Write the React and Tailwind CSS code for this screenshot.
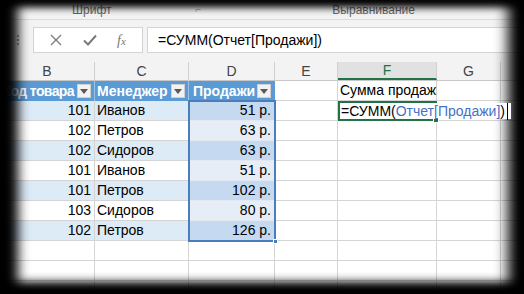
import React from "react";

const rows = [
  ["101", "Иванов", "51 р."],
  ["102", "Петров", "63 р."],
  ["102", "Сидоров", "63 р."],
  ["101", "Иванов", "51 р."],
  ["101", "Петров", "102 р."],
  ["103", "Сидоров", "80 р."],
  ["102", "Петров", "126 р."],
];

const Drop = () => (
  <span className="flex items-center justify-center w-[14px] h-[14px] bg-[#f2f2f2] border border-[#d0d0d0] shrink-0">
    <svg width="8" height="5" viewBox="0 0 8 5">
      <path d="M0 0h8L4 5z" fill="#595959" />
    </svg>
  </span>
);

const ColHead = ({ w, label, active }) => (
  <div
    className={`${w} h-full flex items-center justify-center border-r border-[#d0d0d0] text-[14px] shrink-0 ${
      active
        ? "bg-[#e1e1e1] text-[#217346] border-b-2 border-b-[#217346]"
        : "text-[#444]"
    }`}
  >
    {label}
  </div>
);

const App = () => {
  return (
    <div
      className="relative w-[524px] h-[294px] overflow-hidden bg-[#f3f3f3] text-black"
      style={{ fontFamily: '"Liberation Sans", Arial, sans-serif' }}
    >
      {/* ribbon labels */}
      <div className="h-[20px] flex items-center text-[12px] text-[#666] border-b border-[#dcdcdc]">
        <span className="ml-[72px]">Шрифт</span>
        <span className="ml-[84px] text-[10px] text-[#aaa]">⌐</span>
        <span className="ml-[131px]">Выравнивание</span>
      </div>

      {/* formula bar */}
      <div className="h-[42px] flex items-start pt-[7px]">
        <div className="w-[33px] h-[26px] flex flex-col items-center justify-center gap-[2px] pl-[3px]">
          <span className="w-[2px] h-[2px] bg-[#999]" />
          <span className="w-[2px] h-[2px] bg-[#999]" />
          <span className="w-[2px] h-[2px] bg-[#999]" />
        </div>
        <div className="w-[110px] h-[26px] bg-white border border-[#d4d4d4] flex items-center justify-around px-[6px]">
          <svg width="12" height="12" viewBox="0 0 12 12">
            <path d="M1 1l10 10M11 1L1 11" stroke="#7a7a7a" strokeWidth="1.3" />
          </svg>
          <svg width="14" height="12" viewBox="0 0 14 12">
            <path d="M1 6.5l4 4L13 1.5" stroke="#7a7a7a" strokeWidth="2" fill="none" />
          </svg>
          <span
            className="text-[14px] text-[#777] italic"
            style={{ fontFamily: '"Liberation Serif", serif' }}
          >
            f<span className="text-[11px]">x</span>
          </span>
        </div>
        <div className="flex-1 ml-[4px] h-[26px] bg-white border border-[#d4d4d4] flex items-center pl-[10px] text-[14px]">
          =СУММ(Отчет[Продажи])
        </div>
      </div>

      {/* column headers */}
      <div className="h-[19px] flex bg-[#f3f3f3] border-b border-[#c8c8c8]">
        <ColHead w="w-[95px]" label="B" />
        <ColHead w="w-[94px]" label="C" />
        <ColHead w="w-[86px]" label="D" />
        <ColHead w="w-[63px]" label="E" />
        <ColHead w="w-[99px]" label="F" active />
        <ColHead w="w-[64px]" label="G" />
        <div className="flex-1" />
      </div>

      {/* grid */}
      <div className="relative bg-white text-[14px]">
        {/* table header row */}
        <div className="h-[20px] flex">
          <div className="w-[95px] shrink-0 bg-[#5b9bd5] text-white font-bold flex items-center justify-end gap-[3px] pr-[3px] border-r border-[#9dc3e6] whitespace-nowrap">
            <span className="tracking-[-0.6px]">Код товара</span>
            <Drop />
          </div>
          <div className="w-[94px] shrink-0 bg-[#5b9bd5] text-white font-bold flex items-center justify-between pl-[2px] pr-[3px] border-r border-[#9dc3e6]">
            <span>Менеджер</span>
            <Drop />
          </div>
          <div className="w-[86px] shrink-0 bg-[#5b9bd5] text-white font-bold flex items-center justify-between pl-[4px] pr-[4px]">
            <span>Продажи</span>
            <Drop />
          </div>
          <div className="w-[63px] shrink-0 border-r border-b border-[#d4d4d4]" />
          <div className="w-[99px] shrink-0 border-r border-b border-[#d4d4d4] flex items-center pl-[2px] whitespace-nowrap">
            Сумма продаж
          </div>
          <div className="w-[64px] shrink-0 border-r border-b border-[#d4d4d4]" />
          <div className="flex-1 border-b border-[#d4d4d4]" />
        </div>

        {rows.map(([code, name, sum], i) => {
          const band = i % 2 === 0;
          return (
            <div key={i} className="h-[20px] flex">
              <div
                className={`w-[95px] shrink-0 flex items-center justify-end pr-[3px] border-r border-b border-[#d4d4d4] ${
                  band ? "bg-[#ddebf7]" : "bg-white"
                }`}
              >
                {code}
              </div>
              <div
                className={`w-[94px] shrink-0 flex items-center pl-[2px] border-r border-b border-[#d4d4d4] ${
                  band ? "bg-[#ddebf7]" : "bg-white"
                }`}
              >
                {name}
              </div>
              <div
                className={`w-[86px] shrink-0 flex items-center justify-end pr-[4px] border-b border-[#e2e8f0] ${
                  band ? "bg-[#c5d9f1]" : "bg-[#e6edf7]"
                }`}
              >
                {sum}
              </div>
              <div className="w-[63px] shrink-0 border-r border-b border-[#d4d4d4]" />
              {i === 0 ? (
                <div className="relative w-[99px] shrink-0 border-2 border-[#217346]">
                  <span className="absolute left-0 top-0 h-full z-10 flex items-center pl-[1px] pr-[3px] bg-white whitespace-nowrap">
                    =СУММ(
                    <span className="text-[#4472c4]">Отчет[Продажи]</span>
                    )
                    <span className="ml-[2px] w-px h-[17px] bg-black" />
                  </span>
                  <span className="absolute -right-[4px] -bottom-[4px] w-[6px] h-[6px] bg-[#217346] border border-white" />
                </div>
              ) : (
                <div className="w-[99px] shrink-0 border-r border-b border-[#d4d4d4]" />
              )}
              <div className="w-[64px] shrink-0 border-r border-b border-[#d4d4d4]" />
              <div className="flex-1 border-b border-[#d4d4d4]" />
            </div>
          );
        })}

        {[0, 1, 2].map((i) => (
          <div key={i} className="h-[20px] flex">
            <div className="w-[95px] shrink-0 border-r border-b border-[#d4d4d4]" />
            <div className="w-[94px] shrink-0 border-r border-b border-[#d4d4d4]" />
            <div className="w-[86px] shrink-0 border-r border-b border-[#d4d4d4]" />
            <div className="w-[63px] shrink-0 border-r border-b border-[#d4d4d4]" />
            <div className="w-[99px] shrink-0 border-r border-b border-[#d4d4d4]" />
            <div className="w-[64px] shrink-0 border-r border-b border-[#d4d4d4]" />
            <div className="flex-1 border-b border-[#d4d4d4]" />
          </div>
        ))}

        {/* selection of D range */}
        <div className="absolute left-[188px] top-[19px] w-[88px] h-[142px] border-2 border-[#4a7ebb] pointer-events-none">
          <span className="absolute -right-[4px] -bottom-[4px] w-[5px] h-[5px] bg-[#4a7ebb] border border-white" />
        </div>
      </div>

      {/* screen vignette */}
      <div className="absolute inset-0 pointer-events-none shadow-[inset_18px_0_12px_0_#000,inset_-16px_0_14px_0_#000,inset_0_6px_8px_0_#000,inset_0_-12px_10px_0_#000]" />
    </div>
  );
};

export default App;
